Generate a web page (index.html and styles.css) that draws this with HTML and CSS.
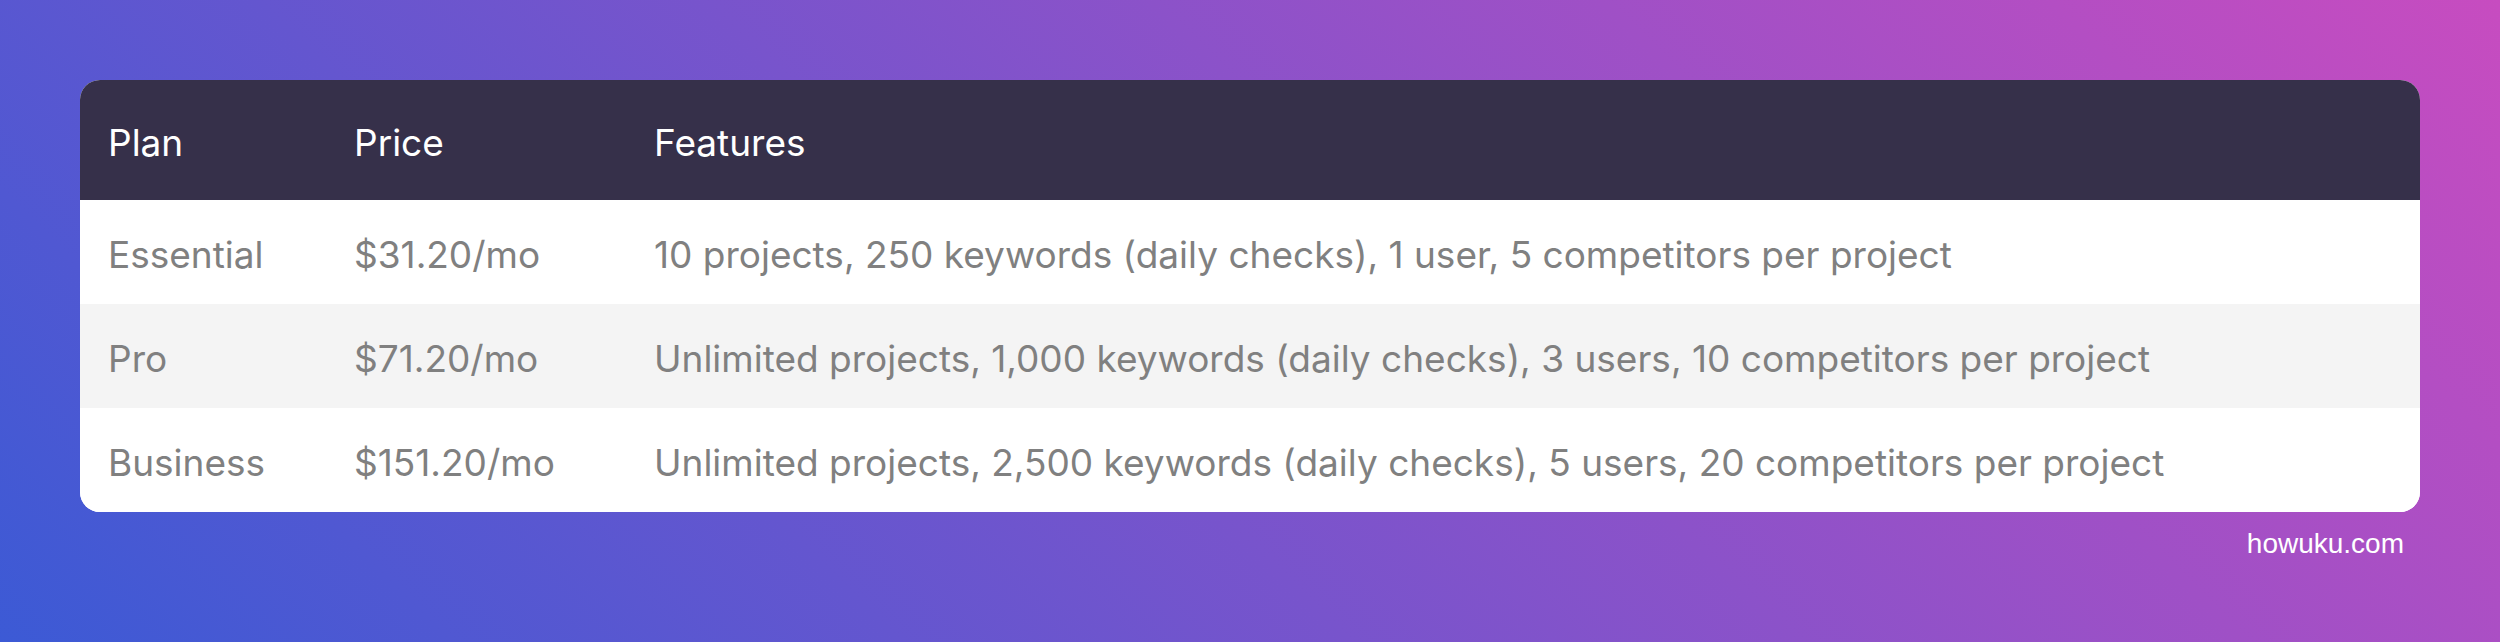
FILE: index.html
```html
<!DOCTYPE html>
<html lang="en">
<head>
<meta charset="utf-8">
<title>Plans</title>
<link rel="stylesheet" href="styles.css">
</head>
<body>
<main class="page">
  <div class="card">
    <div class="row head">
      <div class="cell">Plan</div>
      <div class="cell">Price</div>
      <div class="cell">Features</div>
    </div>
    <div class="row">
      <div class="cell">Essential</div>
      <div class="cell">$31.20/mo</div>
      <div class="cell">10 projects, 250 keywords (daily checks), 1 user, 5 competitors per project</div>
    </div>
    <div class="row alt">
      <div class="cell">Pro</div>
      <div class="cell">$71.20/mo</div>
      <div class="cell">Unlimited projects, 1,000 keywords (daily checks), 3 users, 10 competitors per project</div>
    </div>
    <div class="row">
      <div class="cell">Business</div>
      <div class="cell">$151.20/mo</div>
      <div class="cell">Unlimited projects, 2,500 keywords (daily checks), 5 users, 20 competitors per project</div>
    </div>
  </div>
  <div class="credit">howuku.com</div>
</main>
</body>
</html>
```

FILE: styles.css
```css
* { box-sizing: border-box; }
html, body { margin: 0; padding: 0; }
body {
  width: 2500px;
  height: 642px;
  overflow: hidden;
  background: linear-gradient(45deg, #3c5ad5 0%, #c74cc0 100%);
  font-family: Inter, "Noto Sans", sans-serif;
}
.page {
  padding: 80px 80px 0 80px;
  display: flex;
  flex-direction: column;
}
.card {
  background: #ffffff;
  border-radius: 20px;
  overflow: hidden;
}
.row {
  display: grid;
  grid-template-columns: 246px 300px 1fr;
  align-items: center;
  height: 104px;
  padding-left: 28px;
  padding-top: 4px;
  font-size: 37px;
  color: #808080;
  background: #ffffff;
}
.row.alt { background: #f4f4f4; }
.row.head {
  height: 120px;
  background: #36304a;
  color: #ffffff;
}
.cell { white-space: nowrap; }
.credit {
  align-self: flex-end;
  margin-top: 16px;
  margin-right: 16px;
  font-family: "Liberation Sans", Arial, sans-serif;
  font-size: 28px;
  color: #ffffff;
}
```
